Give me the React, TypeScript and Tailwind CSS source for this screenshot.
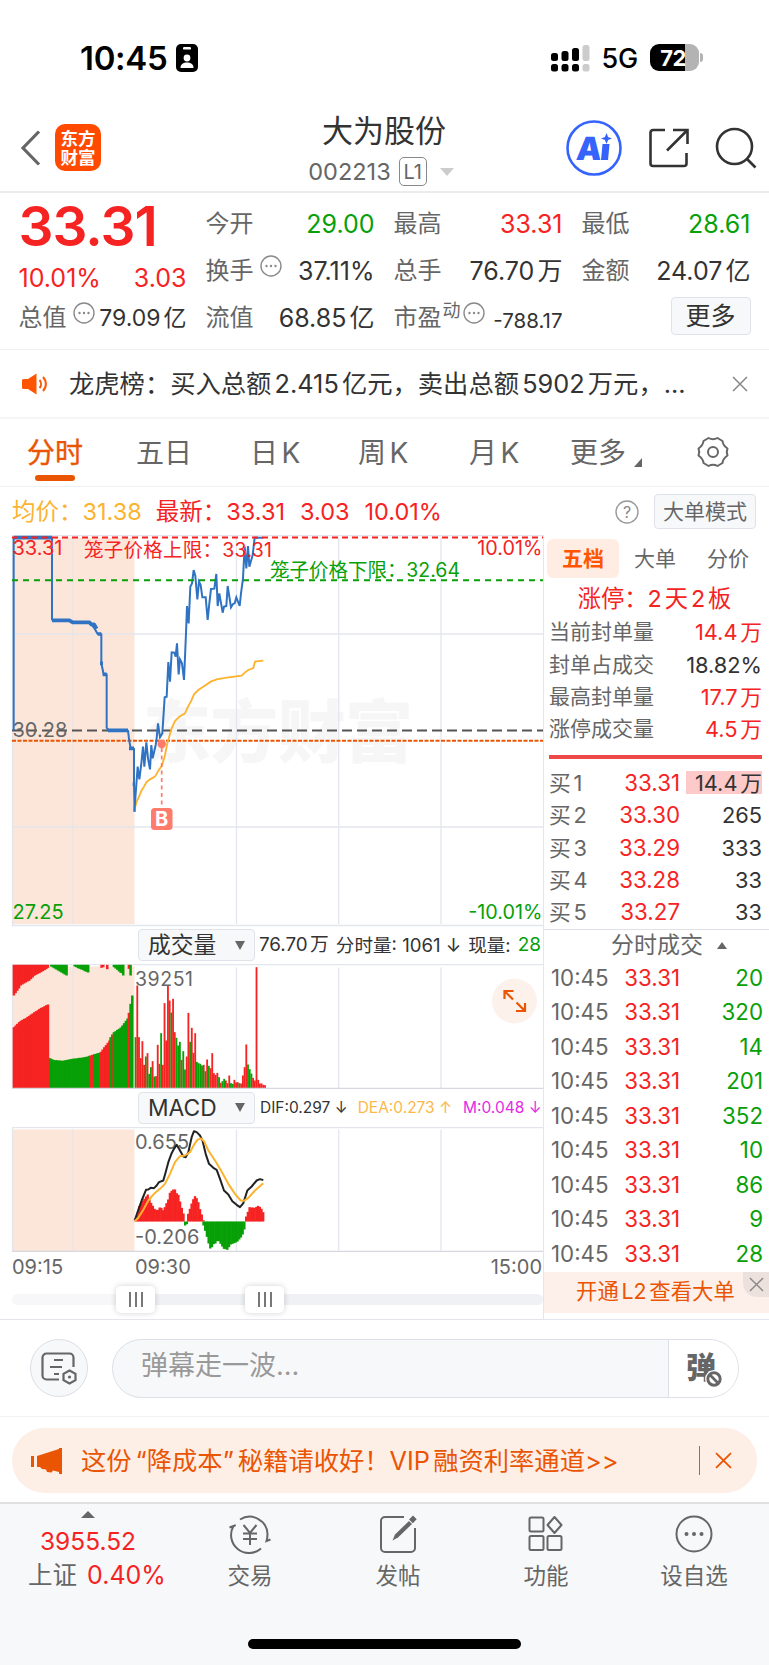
import React from 'react';

interface QuoteCell {
  label: string;
  value: string;
  color: string;
  hint?: boolean;
}

interface Bar {
  x: number;
  y: number;
  h: number;
  up: boolean;
}

const RED = '#f62323';
const GREEN = '#07a007';
const GRID = '#e3e6ed';

const quoteColumns: QuoteCell[][] = [
  [
    { label: '今开', value: '29.00', color: 'text-[#07a007]' },
    { label: '换手', value: '37.11%', color: 'text-[#333]', hint: true },
    { label: '流值', value: '68.85亿', color: 'text-[#333]' },
  ],
  [
    { label: '最高', value: '33.31', color: 'text-[#f62323]' },
    { label: '总手', value: '76.70万', color: 'text-[#333]' },
  ],
  [
    { label: '最低', value: '28.61', color: 'text-[#07a007]' },
    { label: '金额', value: '24.07亿', color: 'text-[#333]' },
  ],
];

const sealRows = [
  { label: '当前封单量', value: '14.4万', color: 'text-[#f62323]' },
  { label: '封单占成交', value: '18.82%', color: 'text-[#333]' },
  { label: '最高封单量', value: '17.7万', color: 'text-[#f62323]' },
  { label: '涨停成交量', value: '4.5万', color: 'text-[#f62323]' },
];

const bids = [
  { label: '买1', price: '33.31', volume: '14.4万' },
  { label: '买2', price: '33.30', volume: '265' },
  { label: '买3', price: '33.29', volume: '333' },
  { label: '买4', price: '33.28', volume: '33' },
  { label: '买5', price: '33.27', volume: '33' },
];

const trades = ['20', '320', '14', '201', '352', '10', '86', '9', '28'];

// Chart data is kept in thirds of a pixel, charts scale it down by 3
const STEP = 5.11;

const pricePoints =
  '43,965 50,870 53,830 58,868 64,820 69,770 73,830 79,757 84,805 90,838 94,765 98,805 107,765 110,745 114,700 120,742 127,730 134,622 140,620 145,516 150,575 155,487 163,488 167,500 171,460 176,553 180,508 186,520 192,570 198,430 201,348 206,400 211,290 216,280 221,240 226,258 232,328 237,275 242,285 247,322 257,322 263,390 268,340 273,297 283,296 289,252 293,348 298,310 308,368 312,350 319,348 323,288 333,352 339,342 344,340 349,322 359,348 363,310 369,265 371,225 374,170 379,235 384,168 388,230 398,195 404,143 430,143';
const avgPoints =
  '43,960 50,935 57,920 64,903 72,890 79,877 90,868 105,860 115,842 125,828 134,800 142,760 155,715 165,693 178,680 195,670 203,652 214,632 222,613 235,600 250,590 272,575 290,568 320,563 365,557 375,547 385,540 400,534 405,515 430,512';
const auctionPoints =
  '41,721 41,143 156,143 156,388 160,393 208,393 218,397 266,397 274,403 284,416 293,432 304,433 304,520 311,553 320,553 320,713 326,722 384,722 387,747 392,775 402,776 402,883 404,965';

const difPoints =
  '404,330 415,298 425,270 438,238 445,237 452,232 462,233 470,225 477,215 490,210 497,185 505,155 515,128 522,115 530,103 540,120 550,138 557,140 565,125 575,80 582,62 590,65 600,75 608,92 617,130 627,160 640,172 650,178 660,205 672,240 685,252 697,272 710,283 720,290 730,278 742,240 755,228 770,210 780,206 790,209';
const deaPoints =
  '404,332 415,322 430,298 445,270 462,250 480,235 495,220 510,190 525,155 540,137 555,135 570,125 582,103 592,88 603,84 612,92 625,120 645,150 660,175 685,220 705,250 722,270 732,271 745,262 765,240 790,218';

const volumeTops =
  'g350 r195 r350 r413 r362 r433 g408 r398 g460 g440 r422 g468 r467 r373 r430 g338 r433 r248 r360 r195 r240 g276 r235 r335 g352 g375 g364 r418 g392 g447 r408 r277 g364 r322 r397 r338 g424 g428 g430 g435 r433 g452 r417 g436 r443 r398 r458 r463 r457 g470 r487 g482 g475 r480 r488 r465 g488 g490 r478 r486 r485 g488 r489 r465 r440 r372 g432 g446 g459 r472 r480 r140 r478 r489 r489 r493 r494'.split(' ');

const volumeBars: Bar[] = volumeTops.map((t, i) => ({
  x: 404 + i * STEP,
  y: Number(t.slice(1)),
  h: 503 - Number(t.slice(1)),
  up: t[0] === 'r',
}));

// Fills the gap between key points with one bar per step
function spread(keys: number[][], base: number, up: boolean): Bar[] {
  const bars: Bar[] = [];
  for (let x = keys[0][0]; x < keys[keys.length - 1][0]; x += STEP) {
    const i = keys.findIndex((k) => k[0] > x);
    const [x0, y0] = keys[i - 1];
    const [x1, y1] = keys[i];
    const y = Math.round(y0 + ((y1 - y0) * (x - x0)) / (x1 - x0));
    bars.push({ x, y: Math.min(y, base), h: Math.abs(base - y), up });
  }
  return bars;
}

const auctionBars: Bar[] = [
  ...spread([[38, 320], [55, 303], [75, 292], [100, 275], [120, 262], [144, 250]], 503, true),
  ...spread([[147, 413], [155, 418], [185, 421], [215, 415], [250, 410], [266, 406]], 503, false),
  ...spread([[268, 405], [277, 402]], 503, true),
  ...spread([[279, 401], [298, 396]], 503, false),
  ...spread([[299, 394], [326, 358]], 503, true),
  ...spread([[328, 350], [332, 350]], 503, false),
  ...spread([[333, 342], [337, 342]], 503, true),
  ...spread([[338, 335], [360, 320], [383, 288]], 503, false),
  ...spread([[383, 277], [387, 277]], 503, true),
  ...spread([[388, 250], [393, 225], [398, 225]], 503, false),
  // unmatched volume hanging from the top
  ...spread([[38, 225], [53, 205], [58, 195], [85, 180], [100, 165], [120, 155], [144, 140]], 133, true),
  ...spread([[150, 138], [201, 168]], 133, false),
  ...spread([[220, 138], [263, 157]], 133, false),
  ...spread([[301, 142], [310, 138]], 133, true),
  ...spread([[318, 146], [322, 146]], 133, true),
  ...spread([[338, 140], [360, 158], [364, 158]], 133, false),
  ...spread([[366, 165], [370, 165]], 133, false),
  ...spread([[383, 145], [387, 145]], 133, true),
  ...spread([[388, 165], [393, 165]], 133, false),
];

const macdBars: Bar[] = [
  ...spread([[404, 330], [410, 310], [414, 287], [425, 270], [440, 252], [446, 270], [452, 280], [462, 298], [472, 298], [477, 288], [487, 300], [495, 280], [500, 272], [505, 248], [515, 237], [523, 237], [528, 252], [535, 253], [537, 275], [545, 302], [552, 325]], 333, true),
  ...spread([[552, 345], [560, 338]], 333, false),
  ...spread([[561, 310], [567, 292], [575, 268], [582, 256], [590, 268], [595, 290], [605, 322], [608, 333]], 333, true),
  ...spread([[607, 345], [615, 370], [625, 410], [630, 418], [635, 402], [645, 398], [650, 388], [655, 395], [668, 415], [680, 418], [687, 403], [700, 398], [710, 393], [720, 380], [728, 365], [734, 335]], 333, false),
  ...spread([[735, 318], [745, 290], [760, 292], [770, 286], [778, 290], [788, 308], [791, 320]], 333, true),
];

const Bars: React.FC<{ bars: Bar[]; width?: number }> = ({ bars, width = 5.5 }) => (
  <>
    {bars.map((b, i) => (
      <rect key={i} x={b.x} y={b.y} width={width} height={b.h} fill={b.up ? RED : GREEN} />
    ))}
  </>
);

const HintIcon: React.FC = () => (
  <svg width="22" height="22" viewBox="0 0 22 22" fill="none" className="shrink-0">
    <circle cx="11" cy="11" r="10" stroke="#8a8a8a" strokeWidth="1.4" />
    <circle cx="6.5" cy="11" r="1.2" fill="#8a8a8a" />
    <circle cx="11" cy="11" r="1.2" fill="#8a8a8a" />
    <circle cx="15.5" cy="11" r="1.2" fill="#8a8a8a" />
  </svg>
);

const CloseIcon: React.FC<{ size: number; color: string; stroke?: number }> = ({ size, color, stroke = 1.5 }) => (
  <svg width={size} height={size} viewBox="0 0 16 16" fill="none" stroke={color} strokeWidth={stroke}>
    <path d="M1 1l14 14M15 1L1 15" />
  </svg>
);

const StatusBar: React.FC = () => (
  <div className="flex h-[108px] shrink-0 items-center pl-[80px] pr-[66px] pt-[7px]">
    <span className="pt-[1px] text-[33px] font-semibold leading-none tracking-[-0.3px] text-black">10:45</span>
    <svg className="ml-[9px]" width="22" height="28" viewBox="0 0 22 28">
      <rect width="22" height="28" rx="5" fill="#000" />
      <rect x="7" y="3" width="8" height="2.6" rx="1.2" fill="#fff" />
      <circle cx="11" cy="14" r="3.4" fill="#fff" />
      <path d="M4.5 24c0-4 3-5.500 6.500-5.500s6.500 1.500 6.500 5.500z" fill="#fff" />
    </svg>
    <svg className="ml-auto" width="39" height="28" viewBox="0 0 39 28">
      <rect x="0" y="9" width="7" height="8" rx="2.500" />
      <rect x="10.500" y="7" width="7" height="10" rx="2.500" />
      <rect x="21" y="4" width="7" height="13" rx="2.500" />
      <rect x="31.500" y="1" width="7" height="16" rx="2.500" fill="#ccc" />
      <rect x="0" y="20" width="7" height="7.500" rx="2.500" />
      <rect x="10.500" y="20" width="7" height="7.500" rx="2.500" />
      <rect x="21" y="20" width="7" height="7.500" rx="2.500" />
      <rect x="31.500" y="20" width="7" height="7.500" rx="2.500" fill="#ccc" />
    </svg>
    <span className="ml-[12px] pt-[2px] text-[27px] font-medium leading-none tracking-[-0.2px] text-black">5G</span>
    <div className="ml-[12px] flex h-[27px] w-[49px] items-center justify-center rounded-[9px] bg-[linear-gradient(90deg,#000_72%,#b3b3b3_72%)]">
      <span className="pr-[3px] text-[22px] font-bold leading-none tracking-[-0.5px] text-white">72</span>
    </div>
    <div className="ml-[1px] h-[9px] w-[3px] rounded-r-full bg-[#b3b3b3]" />
  </div>
);

const Header: React.FC = () => (
  <div className="flex h-[85px] shrink-0 items-center border-b-2 border-[#ececec] pl-[20px] pr-[12px]">
    <div className="flex w-[282px] items-center pb-[4px]">
      <svg width="21" height="36" viewBox="0 0 21 36" fill="none" stroke="#666" strokeWidth="3.200">
        <path d="M19 1.500L3 18l16 16.500" />
      </svg>
      <div className="ml-[14px] flex h-[47px] w-[46px] flex-col items-center justify-center rounded-[10px] bg-[#ff4a00] text-[17.500px] font-bold leading-[19px] text-white">
        <span>东方</span>
        <span>财富</span>
      </div>
    </div>
    <div className="flex w-[164px] flex-col items-center pt-[1px]">
      <h1 className="text-[31px] leading-[34px] text-[#333]">大为股份</h1>
      <div className="mt-[9px] flex items-center">
        <span className="text-[23.500px] leading-[30px] text-[#666]">002213</span>
        <span className="ml-[8px] flex h-[29px] w-[28px] items-center justify-center rounded-[5px] border-[1.5px] border-[#888] text-[20px] leading-none text-[#666]">L1</span>
        <svg className="ml-[13px] mr-[6px]" width="14" height="8" viewBox="0 0 14 8">
          <path d="M0 0h14L7 8z" fill="#ccc" />
        </svg>
      </div>
    </div>
    <div className="ml-auto flex items-center pb-[4px]">
      <svg width="56" height="56" viewBox="0 0 56 56" fill="none">
        <circle cx="28" cy="28" r="26.500" stroke="#3563fb" strokeWidth="2.600" />
        <text x="10" y="40" fill="#3563fb" fontSize="32" fontWeight="900" fontFamily="Inter" transform="skewX(-5) translate(3 0)">A</text>
        <path d="M36.500 24h7l-1.500 16h-7z" fill="#3563fb" />
        <path d="M40.500 13l1.600 3.900 3.900 1.600-3.900 1.600-1.600 3.900-1.600-3.900-3.900-1.600 3.900-1.600z" fill="#3563fb" />
      </svg>
      <svg className="ml-[27px]" width="40" height="40" viewBox="0 0 40 40" fill="none" stroke="#333" strokeWidth="2.600">
        <path d="M16 2H4a2.500 2.500 0 0 0-2.500 2.500v31A2.500 2.500 0 0 0 4 38h31a2.500 2.500 0 0 0 2.500-2.500V25M24 2h14.500v14M38 2.500L18 22.500" />
      </svg>
      <svg className="ml-[26px]" width="42" height="42" viewBox="0 0 42 42" fill="none" stroke="#333" strokeWidth="2.600">
        <circle cx="19.500" cy="19.500" r="17.500" />
        <path d="M32 32l8.500 8.500" />
      </svg>
    </div>
  </div>
);

const QuoteRow: React.FC<{ cell: QuoteCell }> = ({ cell }) => (
  <div className="flex h-[47px] items-center whitespace-nowrap">
    <span className="text-[#666]">{cell.label}</span>
    {cell.hint && (
      <span className="mb-[9px] ml-[6px]">
        <HintIcon />
      </span>
    )}
    <span className={`ml-auto text-[25px] ${cell.color}`}>{cell.value}</span>
  </div>
);

const Quote: React.FC = () => (
  <div className="flex h-[157px] shrink-0 gap-[19px] border-b-[1.5px] border-[#f0f0f0] pl-[18.500px] pr-[18.500px] pt-[7px] text-[24px] leading-[30px]">
    <div className="w-[168px] whitespace-nowrap text-[#f62323]">
      <div className="flex h-[53px] items-center text-[55px] font-semibold leading-none tracking-[-1px]">33.31</div>
      <div className="flex h-[50px] items-center justify-between text-[25px]">
        <span>10.01%</span>
        <span>3.03</span>
      </div>
      <div className="flex h-[30px] items-center">
        <span className="text-[#666]">总值</span>
        <span className="mb-[10px] ml-[6px]">
          <HintIcon />
        </span>
        <span className="ml-auto text-[23px] text-[#333]">79.09亿</span>
      </div>
    </div>
    {quoteColumns.map((cells, i) => (
      <div key={i} className="w-[169px]">
        {cells.map((cell) => (
          <QuoteRow key={cell.label} cell={cell} />
        ))}
        {i === 1 && (
          <div className="flex h-[47px] items-center whitespace-nowrap">
            <span className="text-[#666]">市盈</span>
            <span className="mb-[14px] ml-[1px] text-[18px] text-[#666]">动</span>
            <span className="mb-[10px] ml-[2px]">
              <HintIcon />
            </span>
            <span className="ml-auto mt-[6px] text-[20.500px] text-[#333]">-788.17</span>
          </div>
        )}
        {i === 2 && (
          <button className="ml-auto mt-[3px] flex h-[38px] w-[80px] items-center justify-center rounded-[4px] border-[1.5px] border-[#dfe2e8] bg-[#f7f8fa] text-[25px] text-[#333]">
            更多
          </button>
        )}
      </div>
    ))}
  </div>
);

const News: React.FC = () => (
  <div className="flex h-[69px] shrink-0 items-center border-b-2 border-[#f5f5f5] pl-[22px] pr-[21px]">
    <svg width="26" height="22" viewBox="0 0 26 22" fill="none">
      <path d="M1.500 6H6l8.500-5.500v21L6 16H1.500A1.500 1.500 0 0 1 0 14.500v-7A1.500 1.500 0 0 1 1.500 6z" fill="#ff5500" />
      <path d="M17.500 7a6 6 0 0 1 0 8M21 4a10 10 0 0 1 0 14" stroke="#ff5500" strokeWidth="2" />
    </svg>
    <p className="ml-[21px] whitespace-nowrap text-[25.300px] leading-[36px] text-[#333]">龙虎榜：买入总额2.415亿元，卖出总额5902万元，...</p>
    <span className="ml-auto">
      <CloseIcon size={16} color="#888" />
    </span>
  </div>
);

const PeriodTabs: React.FC = () => (
  <div className="flex h-[68px] shrink-0 items-center border-b-[1.500px] border-[#f0f0f0] pl-[27px] pr-[39px] text-[28px] leading-[34px] text-[#666]">
    <div className="relative w-[109px] text-[#ea5504] [-webkit-text-stroke:0.4px_#ea5504]">
      分时
      <div className="absolute -bottom-[11px] left-[8px] h-[6px] w-[40px] rounded-full bg-[#ea5504]" />
    </div>
    <span className="w-[114px]">五日</span>
    <span className="w-[108px]">日K</span>
    <span className="w-[111px]">周K</span>
    <span className="w-[101px]">月K</span>
    <span className="flex items-end gap-[8px]">
      更多
      <svg className="mb-[3px]" width="8" height="9" viewBox="0 0 8 9">
        <path d="M8 0v9H0z" fill="#666" />
      </svg>
    </span>
    <svg className="ml-auto mb-[2px]" width="34" height="32" viewBox="0 0 34 32" fill="none" stroke="#666" strokeWidth="2">
      <path d="M12.500 2Q17 4.500 21.500 2L26.500 5Q27 9.500 31.500 12.500Q30 16 31.500 19.500Q27 22.500 26.500 27L21.500 30Q17 27.500 12.500 30L7.500 27Q7 22.500 2.500 19.500Q4 16 2.500 12.500Q7 9.500 7.500 5Z" strokeLinejoin="round" />
      <circle cx="17" cy="16" r="5" />
    </svg>
  </div>
);

const ChartLegend: React.FC = () => (
  <div className="flex h-[48px] shrink-0 items-center whitespace-nowrap pl-[12px] pr-[13px] pt-[1px] text-[23.500px] leading-[30px] text-[#f62323]">
    <span className="text-[#fbb330]">均价：31.38</span>
    <span className="ml-[14px]">最新：33.31</span>
    <span className="ml-[15px]">3.03</span>
    <span className="ml-[15px]">10.01%</span>
    <svg className="ml-auto" width="24" height="24" viewBox="0 0 24 24" fill="none">
      <circle cx="12" cy="12" r="11" stroke="#999" strokeWidth="1.400" />
      <text x="12" y="17.500" textAnchor="middle" fontSize="16" fill="#888">?</text>
    </svg>
    <button className="ml-[15px] flex h-[35px] w-[102px] items-center justify-center rounded-[4px] border-[1.500px] border-[#dfe2e8] bg-[#f7f8fa] text-[21px] text-[#666]">
      大单模式
    </button>
  </div>
);

const PriceChart: React.FC = () => (
  <svg width="544" height="392" viewBox="0 535 544 392" className="block shrink-0" fontSize="20">
    <rect x="13" y="538" width="121.500" height="386" fill="#fce6da" />
    <g fill="#f6f6f6" fontSize="68" fontWeight="900">
      <text x="143" y="757" textLength="270">东方财富</text>
    </g>
    <g stroke={GRID} strokeWidth="1.300">
      <path d="M12 535.500H543.500M12.500 535V925.500M12 634H543M12 827H543M12 925.500H543" />
      <path d="M73 538V924M236.500 538V924M338.700 538V924M441 538V924" />
    </g>
    <path d="M12 730.500H543" stroke="#555" strokeWidth="2" strokeDasharray="10 5" />
    <path d="M12 740.700H543" stroke="#ea5504" strokeWidth="2" strokeDasharray="4 1.500" />
    <text x="12.500" y="737" fill="#666" fontSize="20">30.28</text>
    <g transform="translate(0 490) scale(0.33333)" fill="none" strokeLinejoin="round">
      <polyline points={auctionPoints} stroke="#2f73c2" strokeWidth="6" />
      <path d="M41 143H156M156 391H208L218 397H268L274 403H282L290 416M293 432H304M324 721H384M387 775H402M300 520H309M308 553H320M398 883H404" stroke="#2f73c2" strokeWidth="11" />
    </g>
    <g transform="translate(120 490) scale(0.33333)" fill="none">
      <polyline points={avgPoints} stroke="#fbb330" strokeWidth="5.500" />
      <polyline points={pricePoints} stroke="#2f73c2" strokeWidth="6" />
    </g>
    <path d="M12 537.500H543" stroke={RED} strokeWidth="2" strokeDasharray="6 4" />
    <path d="M12 580.300H543" stroke={GREEN} strokeWidth="2" strokeDasharray="6 5" />
    <g fill={RED} fontSize="19.500">
      <text x="12.500" y="555" fontSize="20">33.31</text>
      <text x="84" y="557" textLength="188">笼子价格上限：33.31</text>
      <text x="542.500" y="555" textAnchor="end" fontSize="19.800">10.01%</text>
    </g>
    <g fill={GREEN} fontSize="19.500">
      <text x="270" y="576.500" textLength="190">笼子价格下限：32.64</text>
      <text x="12.500" y="919" fontSize="20">27.25</text>
      <text x="542.500" y="919" textAnchor="end" fontSize="19.800">-10.01%</text>
    </g>
    {/* Buy marker */}
    <path d="M161.700 748V808" stroke="#ff7b6b" strokeWidth="1.700" strokeDasharray="4 3.500" />
    <circle cx="161.700" cy="744" r="4.200" fill="#ff7b6b" />
    <rect x="151" y="808" width="21.500" height="22" rx="3.500" fill="#ff7b6b" />
    <text x="161.700" y="826" textAnchor="middle" fontSize="20" fontWeight="700" fill="#fff">B</text>
  </svg>
);

const IndicatorSelect: React.FC<{ name: string }> = ({ name }) => (
  <div className="ml-[138px] flex h-[32px] w-[117px] shrink-0 items-center justify-between rounded-[4px] border-[1.500px] border-[#dfe2e8] bg-[#f7f8fa] pl-[9px] pr-[9px] text-[22.800px] leading-[28px] text-[#333]">
    {name}
    <svg width="10" height="9" viewBox="0 0 10 9">
      <path d="M0 0h10L5 9z" fill="#666" />
    </svg>
  </div>
);

const VolumeChart: React.FC = () => (
  <svg width="544" height="125" viewBox="0 963.500 544 125" className="block shrink-0">
    <rect x="13" y="966" width="121.500" height="122" fill="#fce6da" />
    <path d="M12 964H543M12.500 964V1088" stroke={GRID} strokeWidth="1.300" />
    <path d="M73 967V1088M236.500 967V1088M338.700 967V1088M441 967V1088" stroke={GRID} strokeWidth="1.300" />
    <g transform="translate(0 920) scale(0.33333)">
      <Bars bars={auctionBars} width={7.5} />
      <Bars bars={volumeBars} />
    </g>
    <text x="135" y="985.500" fontSize="19.500" fill="#666" textLength="58">39251</text>
    <path d="M12 1088H543" stroke="#d5d8de" strokeWidth="1.300" />
    <circle cx="514.500" cy="1000.500" r="22.500" fill="#fdf1eb" />
    <path d="M513 999l-8.500-8.500M504.500 998.500v-8h9M516.500 1002l8.500 8.500M525 1002.500v8h-9" fill="none" stroke="#ea5504" strokeWidth="2.200" />
  </svg>
);

const MacdChart: React.FC = () => (
  <svg width="544" height="125" viewBox="0 1126.500 544 125" className="block shrink-0">
    <rect x="13" y="1129" width="121.500" height="122" fill="#fce6da" />
    <path d="M12 1127H543M12.500 1127V1251" stroke={GRID} strokeWidth="1.300" />
    <path d="M73 1129V1250M236.500 1129V1250M338.700 1129V1250M441 1129V1250" stroke={GRID} strokeWidth="1.300" />
    <text x="135" y="1148" fontSize="20" fill="#666">0.655</text>
    <g transform="translate(0 1110) scale(0.33333)" fill="none" strokeLinejoin="round">
      <Bars bars={macdBars} width={7} />
      <polyline points={difPoints} stroke="#222" strokeWidth="6" />
      <polyline points={deaPoints} stroke="#fbb330" strokeWidth="6" />
    </g>
    <text x="135" y="1243.500" fontSize="20" fill="#666">-0.206</text>
    <path d="M12 1251H543" stroke="#d5d8de" strokeWidth="1.300" />
  </svg>
);

const SliderHandle: React.FC<{ className: string }> = ({ className }) => (
  <div className={`absolute -top-[8px] flex h-[27px] w-[39px] items-center justify-center gap-[4px] rounded-[5px] bg-white shadow-[0_0_6px_rgba(0,0,0,0.18)] ${className}`}>
    <div className="h-[15px] w-[2px] bg-[#777]" />
    <div className="h-[15px] w-[2px] bg-[#777]" />
    <div className="h-[15px] w-[2px] bg-[#777]" />
  </div>
);

const Charts: React.FC = () => (
  <div className="flex w-[544px] shrink-0 flex-col border-r-[1.500px] border-[#e3e6ed]">
    <PriceChart />
    <div className="flex h-[36.500px] shrink-0 items-center whitespace-nowrap text-[18.500px] leading-[24px] text-[#333]">
      <IndicatorSelect name="成交量" />
      <span className="ml-[4px] text-[18.800px]">76.70万</span>
      <span className="ml-[7px] text-[18.600px]">分时量: 1061 ↓</span>
      <span className="ml-[7px]">现量:</span>
      <span className="ml-[7px] text-[19px] text-[#07a007]">28</span>
    </div>
    <VolumeChart />
    <div className="flex h-[38px] shrink-0 items-center whitespace-nowrap text-[15.500px] leading-[24px] text-[#333]">
      <IndicatorSelect name="MACD" />
      <span className="ml-[5px]">DIF:0.297 ↓</span>
      <span className="ml-[10px] text-[#fdb84a]">DEA:0.273 ↑</span>
      <span className="ml-[11px] text-[#e32be3]">M:0.048 ↓</span>
    </div>
    <MacdChart />
    <div className="flex h-[30px] shrink-0 items-center pl-[12px] text-[20px] leading-[24px] text-[#666]">
      <span className="w-[123px]">09:15</span>
      <span>09:30</span>
      <span className="ml-auto pr-[1px]">15:00</span>
    </div>
    <div className="relative ml-[12px] mt-[12px] h-[11px] w-[531px] rounded-full bg-[linear-gradient(90deg,#f7f7f9_23%,#f0f1f4_23%)]">
      <SliderHandle className="left-[104px]" />
      <SliderHandle className="left-[233px]" />
    </div>
  </div>
);

const OrderBook: React.FC = () => (
  <div className="flex min-w-0 flex-1 flex-col whitespace-nowrap text-[21px] leading-[30px] text-[#666]">
    <div className="ml-[3px] mt-[4px] flex h-[39px] items-center">
      <span className="flex h-[39px] w-[72px] items-center justify-center rounded-[6px] bg-[#ffede4] font-bold text-[#ff5500]">五档</span>
      <span className="ml-[15px]">大单</span>
      <span className="ml-[31px]">分价</span>
    </div>
    <div className="mt-[4px] flex h-[34px] items-center justify-center pr-[4px] text-[23.300px] text-[#f62323]">涨停：2天2板</div>
    {sealRows.map((row) => (
      <div key={row.label} className="flex h-[32.400px] shrink-0 items-center justify-between pl-[5px] pr-[7px]">
        <span>{row.label}</span>
        <span className={`text-[21.800px] ${row.color}`}>{row.value}</span>
      </div>
    ))}
    <div className="ml-[5px] mt-[9px] h-[4px] w-[213px] shrink-0 bg-[#ee4848]" />
    <div className="mt-[8px] border-b-[1.500px] border-[#dfe1e6]">
      {bids.map((bid, i) => (
        <div key={bid.label} className="flex h-[32.400px] items-center pl-[5px] pr-[7px] text-[21.800px]">
          <span className="w-[44px]">{bid.label}</span>
          <span className="w-[87px] text-right text-[22.300px] text-[#f62323]">{bid.price}</span>
          <span className={`ml-auto flex h-[23px] w-[76px] items-center justify-end text-[#333] ${i === 0 ? 'bg-[#fdc9c9]' : ''}`}>{bid.volume}</span>
        </div>
      ))}
    </div>
    <div className="flex h-[31px] shrink-0 items-center justify-center gap-[14px] pl-[25px] text-[23px]">
      分时成交
      <svg width="10" height="7" viewBox="0 0 10 7">
        <path d="M0 7h10L5 0z" fill="#666" />
      </svg>
    </div>
    {trades.map((volume, i) => (
      <div key={i} className="flex h-[34.500px] shrink-0 items-center pl-[7px] pr-[6px] text-[22.300px]">
        <span className="w-[60px]">10:45</span>
        <span className="w-[69px] text-right text-[#f62323]">33.31</span>
        <span className="ml-auto text-[#07a007]">{volume}</span>
      </div>
    ))}
    <div className="relative mt-[1px] flex h-[41px] shrink-0 items-center pl-[32px] pb-[3px] text-[21.400px] text-[#ea5504] bg-[#fdf0ea]">
      开通L2查看大单
      <div className="absolute right-0 top-0 flex h-[25px] w-[26px] items-center justify-center rounded-bl-[14px] bg-[#ece1dc]">
        <CloseIcon size={15} color="#888" />
      </div>
    </div>
  </div>
);

const DanmakuBar: React.FC = () => (
  <div className="flex h-[98px] shrink-0 items-center border-b-[1.500px] border-t-[1.500px] border-b-[#f2f2f4] border-t-[#e3e5ea] pl-[30px] pr-[30px]">
    <div className="flex size-[58px] items-center justify-center rounded-full border-[1.500px] border-[#dcdfe6] bg-[#f7f8fa]">
      <svg width="36" height="33" viewBox="0 0 36 33" fill="none" stroke="#666" strokeWidth="2.200">
        <path d="M18 27.500H5.500a4 4 0 0 1-4-4v-18a4 4 0 0 1 4-4h23a4 4 0 0 1 4 4V15" />
        <path d="M13 8h9M9 15h12M13 22h5" />
        <path d="M28.500 18.500l6 3.300v6.400l-6 3.300-6-3.300v-6.400z" />
        <circle cx="28.500" cy="25" r="1.600" fill="#666" stroke="none" />
      </svg>
    </div>
    <div className="ml-[24px] flex h-[59px] flex-1 overflow-hidden rounded-full border-[1.500px] border-[#dcdfe6] bg-[#f7f8fa]">
      <div className="flex flex-1 items-center pb-[5px] pl-[28px] text-[27px] leading-[36px] text-[#999]">弹幕走一波...</div>
      <div className="relative flex w-[70px] items-center border-l-[1.500px] border-[#dcdfe6] bg-white pb-[2px] pl-[17px]">
        <span className="text-[30px] font-black leading-none text-[#666]">弹</span>
        <svg className="absolute left-[36px] top-[30px]" width="18" height="18" viewBox="0 0 16 16" fill="none">
          <circle cx="8" cy="8" r="5.700" fill="#fff" stroke="#fff" strokeWidth="4.500" />
          <circle cx="8" cy="8" r="5.500" stroke="#666" strokeWidth="2.600" />
          <path d="M4.500 4.500l7 7" stroke="#666" strokeWidth="2.400" />
        </svg>
      </div>
    </div>
  </div>
);

const Promo: React.FC = () => (
  <div className="h-[87px] shrink-0 border-b-2 border-[#e0e0e2] px-[12px] pt-[11px]">
    <div className="flex h-[65px] items-center whitespace-nowrap rounded-full bg-[#fdeee6] pl-[19px] pr-[25px] text-[25.300px] leading-[36px] text-[#ea5504]">
      <svg width="31" height="26" viewBox="0 0 31 26" fill="#ea5504">
        <rect x="0" y="8" width="3" height="11" />
        <path d="M6 8L28 1V0h3v26h-3v-2l-6-1.500-1.500 2-4.500-.500-1-2.500-4-.500L9 19H6z" />
      </svg>
      <span className="ml-[19px]">
        这份<span className="ml-[4px]">“降成本”</span>
        <span className="ml-[4px]">秘籍请收好！VIP融资利率通道&gt;&gt;</span>
      </span>
      <div className="ml-auto h-[29px] w-[1.500px] bg-[#ea5504]" />
      <span className="ml-[15px]">
        <CloseIcon size={17} color="#ea5504" stroke={1.700} />
      </span>
    </div>
  </div>
);

const NavItem: React.FC<{ label: string; className: string; children: React.ReactNode }> = ({ label, className, children }) => (
  <div className={`flex flex-col items-center ${className}`}>
    <svg width="42" height="40" viewBox="0 0 42 40" fill="none" stroke="#666" strokeWidth="2">
      {children}
    </svg>
    <span className="mt-[7px] text-[22.500px] leading-[30px] text-[#666]">{label}</span>
  </div>
);

const BottomNav: React.FC = () => (
  <div className="flex flex-1 flex-col items-center bg-[#f7f8fa]">
    <div className="flex h-[135px] w-full">
      <div className="flex w-[176px] flex-col items-center pt-[7px] text-[24.500px] leading-[30px] text-[#f62323]">
        <svg width="14" height="7" viewBox="0 0 14 7">
          <path d="M0 7h14L7 0z" fill="#666" />
        </svg>
        <span className="mt-[8px] text-[24.500px]">3955.52</span>
        <div className="mt-[4px] flex gap-[10px] pl-[18px]">
          <span className="text-[#666]">上证</span>
          <span className="text-[25px]">0.40%</span>
        </div>
      </div>
      <div className="flex flex-1 pt-[10px]">
        <NavItem label="交易" className="w-[148px]">
          <path d="M11 5.500A18 18 0 0 1 38.500 20q0 4-1 7l4-1.500M32 34.500A18 18 0 0 1 4.500 12L.500 13.500M4 12q2 0 2-1" />
          <path d="M14.500 11l6.500 8 6.500-8M14 19.500h14M14 25h14M21 19v12" />
        </NavItem>
        <NavItem label="发帖" className="w-[148px]">
          <path d="M27 3H8a4 4 0 0 0-4 4v27a4 4 0 0 0 4 4h26a4 4 0 0 0 4-4V14" />
          <path d="M15.500 26.500l2.500-6L32 7l3 3-14 13.500z" fill="#666" stroke="none" />
          <path d="M33.500 5.500L36 3l2.300 2.300-2.500 2.500z" fill="#666" />
        </NavItem>
        <NavItem label="功能" className="w-[148px]">
          <rect x="4.500" y="3.500" width="14" height="14" rx="1.500" />
          <rect x="4.500" y="22" width="14" height="14" rx="1.500" />
          <rect x="22.500" y="22" width="14" height="14" rx="1.500" />
          <path d="M29.500 3l7 8-7 8-7-8z" strokeLinejoin="round" />
        </NavItem>
        <NavItem label="设自选" className="w-[148px]">
          <circle cx="21" cy="20" r="17.500" />
          <g fill="#666" stroke="none">
            <circle cx="13.500" cy="20" r="2" />
            <circle cx="21" cy="20" r="2" />
            <circle cx="28.500" cy="20" r="2" />
          </g>
        </NavItem>
      </div>
    </div>
    <div className="h-[10px] w-[273px] rounded-full bg-black" />
  </div>
);

export default function App() {
  return (
    <div className="flex h-[1665px] w-[769px] flex-col overflow-hidden bg-white font-['Inter','Noto_Sans_CJK_SC',sans-serif] [text-autospace:normal]">
      <StatusBar />
      <Header />
      <Quote />
      <News />
      <PeriodTabs />
      <ChartLegend />
      <div className="flex h-[784px] shrink-0">
        <Charts />
        <OrderBook />
      </div>
      <DanmakuBar />
      <Promo />
      <BottomNav />
    </div>
  );
}
